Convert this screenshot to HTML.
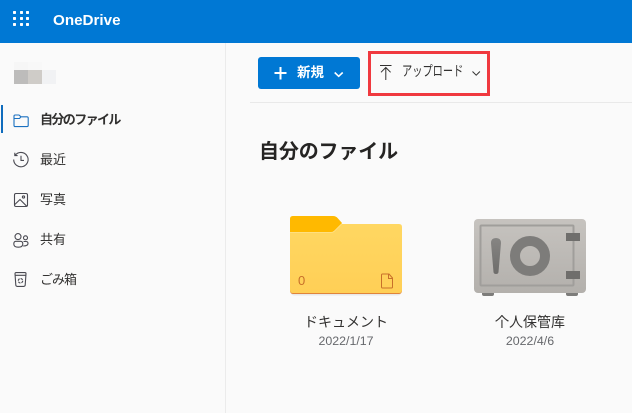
<!DOCTYPE html>
<html lang="ja"><head><meta charset="utf-8"><style>
html,body{margin:0;padding:0}
body{width:632px;height:413px;position:relative;overflow:hidden;background:#fafafa;font-family:"Liberation Sans","Noto Sans CJK JP",sans-serif;color:#323130}
.a{position:absolute;white-space:nowrap}
svg{position:absolute;overflow:visible}
.n{left:40px;font-size:13px;line-height:20px;color:#323130}
.c{text-align:center;width:160px}
.nm{font-size:14px;line-height:20px;color:#323130}
.dt{font-size:12.4px;line-height:16px;color:#66686c;font-family:"Liberation Sans",sans-serif}
</style></head><body>
<div class="a" style="left:0;top:0;width:632px;height:43px;background:#0078d4"></div>
<svg style="left:0;top:0" width="40" height="43" fill="#fff"><rect x="13" y="11" width="3" height="3" rx=".7"/><rect x="20" y="11" width="3" height="3" rx=".7"/><rect x="26" y="11" width="3" height="3" rx=".7"/><rect x="13" y="17" width="3" height="3" rx=".7"/><rect x="20" y="17" width="3" height="3" rx=".7"/><rect x="26" y="17" width="3" height="3" rx=".7"/><rect x="13" y="23" width="3" height="3" rx=".7"/><rect x="20" y="23" width="3" height="3" rx=".7"/><rect x="26" y="23" width="3" height="3" rx=".7"/></svg>
<div class="a" style="left:53px;top:11px;font-size:15.2px;line-height:20px;font-weight:bold;color:#fff">OneDrive</div>

<div class="a" style="left:225px;top:43px;width:1px;height:370px;background:#ebebeb"></div>
<div class="a" style="left:14px;top:62px;width:14px;height:8px;background:#f6f6f6"></div>
<div class="a" style="left:28px;top:62px;width:14px;height:8px;background:#f8f8f8"></div>
<div class="a" style="left:14px;top:70px;width:14px;height:14px;background:#bdbcbb"></div>
<div class="a" style="left:28px;top:70px;width:14px;height:14px;background:#cfccc8"></div>
<div class="a" style="left:42px;top:70px;width:14px;height:14px;background:#f1f2f4"></div>

<div class="a" style="left:1px;top:105px;width:2px;height:28px;background:#0f6cbd"></div>
<svg style="left:13px;top:114px" width="16" height="14" fill="none" stroke="#1a70c0" stroke-width="1.1"><path d="M1 3V2.200Q1 1 2.200 1H6L8 2.800H14Q15.200 2.800 15.200 4V11.400Q15.200 12.600 14 12.600H2.200Q1 12.600 1 11.400ZM1 4.500H6.500L8 2.800"/></svg>
<div class="a n" style="top:110px;font-weight:bold;letter-spacing:-1.600px">自分のファイル</div>

<svg style="left:13px;top:152px" width="16" height="16" fill="none" stroke="#4a4a52" stroke-width="1.1"><path d="M2.200 3.200A7.200 7.200 0 1 1 .7 7.500M1.800 .8V3.600H4.600M8 3.800V8.400H11"/></svg>
<div class="a n" style="top:150px">最近</div>

<svg style="left:14px;top:193px" width="14" height="14" fill="none" stroke="#4a4a52" stroke-width="1.1"><rect x=".5" y=".5" width="13" height="13" rx="1.500"/><path d="M.8 11.500L6 6.500L12.800 13.300"/><circle cx="9.500" cy="4" r="1.100"/></svg>
<div class="a n" style="top:190px">写真</div>

<svg style="left:13px;top:233px" width="16" height="15" fill="none" stroke="#4a4a52" stroke-width="1.1"><circle cx="5" cy="3.600" r="3"/><circle cx="12.500" cy="4.800" r="2"/><path d="M.8 11Q.8 8.300 2.800 8.300H7.500Q9.800 8.300 9.800 11Q9.800 14.200 5.300 14.200Q.8 14.200 .8 11ZM10.500 8.500H13Q15 8.500 15 10.400Q15 13 10.200 13"/></svg>
<div class="a n" style="top:230px">共有</div>

<svg style="left:14px;top:272px" width="13" height="15" fill="none" stroke="#4a4a52" stroke-width="1.1"><path d="M1 1.700Q1 .6 2.100 .6H10.900Q12 .6 12 1.700L11.200 13Q11.100 14.400 9.700 14.400H3.300Q1.900 14.400 1.800 13ZM1.200 3.300H11.800"/><circle cx="6.500" cy="8.800" r="2.200" stroke-dasharray="2.400 1"/></svg>
<div class="a n" style="top:270px;letter-spacing:-1px">ごみ箱</div>

<div class="a" style="left:258px;top:57px;width:102px;height:32px;border-radius:3px;background:#0078d4"></div>
<svg style="left:274px;top:67px" width="13" height="12" stroke="#fff" stroke-width="2"><path d="M6.500 0V12.500M.5 6H12.500"/></svg>
<div class="a" style="left:297px;top:63px;font-size:13.500px;line-height:20px;font-weight:bold;color:#fff">新規</div>
<svg style="left:334px;top:72px" width="10" height="5" fill="none" stroke="#fff" stroke-width="1.600"><path d="M.7 .5L4.700 4.300L8.700 .5"/></svg>

<div class="a" style="left:368px;top:51px;width:122px;height:45px;box-sizing:border-box;border:3px solid #f0393f"></div>
<svg style="left:380px;top:65px" width="12" height="15" fill="none" stroke="#323130" stroke-width="1"><path d="M0 .5H11.500M5.800 15V2.500M1 7.300L5.800 2.500L10.600 7.300"/></svg>
<div class="a" style="left:402px;top:61px;width:61px;font-size:14px;line-height:20px;color:#323130;transform:scaleX(.73);transform-origin:left center">アップロード</div>
<svg style="left:472px;top:71px" width="9" height="5" fill="none" stroke="#323130" stroke-width="1"><path d="M.5 .5L4.200 4.200L7.900 .5"/></svg>

<div class="a" style="left:250px;top:102px;width:382px;height:1px;background:#e9e9e9"></div>
<div class="a" style="left:259px;top:138px;font-size:20px;line-height:28px;font-weight:bold;color:#252423;letter-spacing:-.15px">自分のファイル</div>

<svg style="left:290px;top:216px" width="112" height="79">
<defs><linearGradient id="f" x1="0" y1="0" x2="0" y2="1"><stop offset="0" stop-color="#ffd863"/><stop offset="1" stop-color="#ffcf56"/></linearGradient>
<linearGradient id="s" x1="0" y1="0" x2="0" y2="1"><stop offset="0" stop-color="#c6c3bf"/><stop offset="1" stop-color="#b3b0ac"/></linearGradient>
<linearGradient id="d" x1="0" y1="0" x2="0" y2="1"><stop offset="0" stop-color="#868583"/><stop offset="1" stop-color="#6e6d6b"/></linearGradient></defs>
<rect x="1" y="70" width="110" height="9.500" rx="3" fill="#000" opacity=".07"/>
<rect x="0" y="60" width="112" height="18" rx="3" fill="#e0843a"/>
<path d="M3 0H43L52 8H109Q112 8 112 11V74Q112 77 109 77H3Q0 77 0 74V3Q0 0 3 0Z" fill="url(#f)"/>
<path d="M3 0H43Q46 0 48 2.500L52 7L44 15Q43 16 41 16H0V3Q0 0 3 0Z" fill="#ffb900"/>
<path d="M0 16.500H41Q43 16.500 44.500 15L52 7.500" fill="none" stroke="#ffe28a" stroke-width=".8"/>
<path d="M92.500 58H99L102.500 62V71Q102.500 72 101.500 72H92.500Q91.500 72 91.500 71V59Q91.500 58 92.500 58ZM98.500 58V62.500H102.500" fill="none" stroke="#c8702a" stroke-width="1"/>
</svg>
<div class="a" style="left:298px;top:273px;font-size:13px;line-height:16px;color:#c8702a">0</div>
<div class="a c nm" style="left:266px;top:312px">ドキュメント</div>
<div class="a c dt" style="left:266px;top:333px">2022/1/17</div>

<svg style="left:474px;top:219px" width="112" height="78">
<rect x="8" y="70" width="12" height="7" rx="2" fill="#7d7c7a"/><rect x="92" y="70" width="12" height="7" rx="2" fill="#7d7c7a"/>
<rect x="0" y="0" width="112" height="74" rx="4" fill="url(#s)"/>
<rect x="6.500" y="6.500" width="93" height="60" rx="1" fill="none" stroke="#a09e9b" stroke-width="2"/>
<rect x="92" y="14" width="14" height="8" fill="#6f6e6c"/>
<rect x="92" y="52" width="14" height="8" fill="#6f6e6c"/>
<path d="M22 19Q17 19 17 24L19.500 53Q19.700 55 22 55Q24.300 55 24.500 53L27 24Q27 19 22 19Z" fill="url(#d)"/>
<circle cx="56" cy="37" r="15" fill="none" stroke="#7d7c7a" stroke-width="10"/>
</svg>
<div class="a c nm" style="left:450px;top:312px;font-family:'Liberation Sans','Noto Sans CJK SC',sans-serif">个人保管库</div>
<div class="a c dt" style="left:450px;top:333px">2022/4/6</div>
</body></html>
